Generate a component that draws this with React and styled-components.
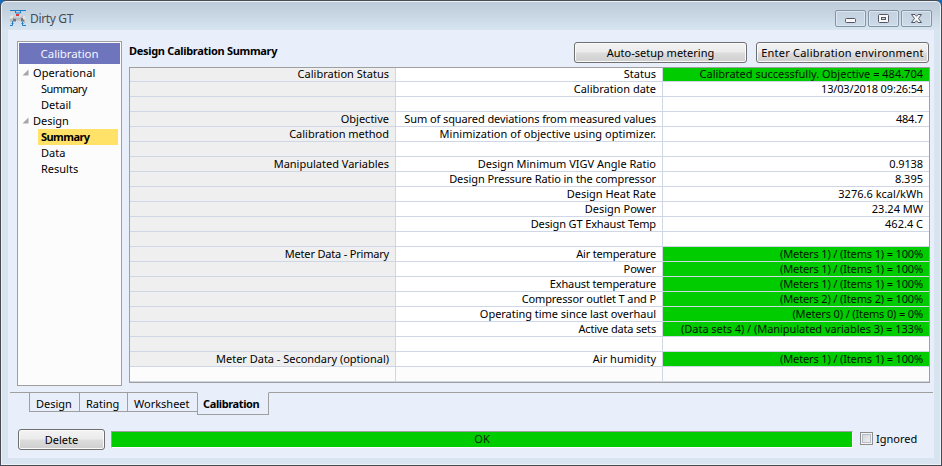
import React from 'react';
import styled, { createGlobalStyle, css } from 'styled-components';

const Global = createGlobalStyle`
  * { box-sizing: border-box; }
  html, body { margin: 0; padding: 0; overflow: hidden; }
  body {
    background: #0a6fc8;
    font-family: "Noto Sans", "Open Sans", sans-serif;
    font-size: 11px;
    color: #000;
  }
`;

const Window = styled.div`
  width: 942px;
  height: 466px;
  display: flex;
  flex-direction: column;
  padding: 0 7px 7px;
  border: 1px solid #4a4b50;
  border-radius: 6px 6px 0 0;
  background: linear-gradient(#bccad9 0, #c6d4e2 12px, #d8e5f1 29px, #d8e5f1 100%);
  box-shadow: inset 0 0 0 1px #eaf2f9;
`;

const TitleBar = styled.header`
  flex: 0 0 29px;
  display: flex;
  align-items: flex-start;
  padding: 9px 2px 0 1px;
`;

const AppIcon = styled.svg`
  width: 18px;
  height: 17px;
  margin-right: 3px;
`;

const WindowTitle = styled.span`
  flex: 1;
  color: #444c55;
  font-size: 12px;
  line-height: 18px;
  letter-spacing: -0.35px;
`;

const CaptionButtons = styled.div`
  display: flex;
  gap: 2px;
`;

const CaptionButton = styled.button`
  width: 31px;
  height: 17px;
  padding: 0;
  display: flex;
  border: 1px solid #8593a6;
  border-radius: 2px;
  background: linear-gradient(#c4d1df, #ccd9e6);
  box-shadow: inset 0 0 0 1px #dbe6f0;
`;

const Client = styled.main`
  flex: 1;
  display: flex;
  flex-direction: column;
  min-height: 0;
  padding: 11px 1px 8px 2px;
  background: #e8effa;
`;

const Page = styled.div`
  flex: 0 0 345px;
  display: flex;
  gap: 7px;
  padding: 0 3px 0 7px;
`;

const Sidebar = styled.nav`
  flex: 0 0 105px;
  border: 1px solid #9f9fa0;
  padding: 1px;
  background: #fcfcfc;
`;

const SidebarHeader = styled.div`
  height: 21px;
  margin-bottom: 1px;
  background: #6f75bd;
  color: #f5f5ff;
  text-align: center;
  font-size: 11.5px;
  line-height: 22px;
  letter-spacing: -0.1px;
`;

const TreeRow = styled.div`
  display: flex;
  align-items: center;
  height: 16px;
  padding-bottom: 2px;
  line-height: 15px;
  margin: 0 2px 0 ${(p) => (p.$child ? 19 : 3)}px;
  padding-left: ${(p) => (p.$child ? 3 : 0)}px;
  letter-spacing: ${(p) => p.$ls || 0}px;
  white-space: nowrap;
  ${(p) =>
    p.$selected &&
    css`
      background: #ffe267;
      font-weight: 700;
    `}
`;

const Expander = styled.svg`
  width: 7px;
  height: 7px;
  margin: 0 4px 0 0;
`;

const Content = styled.section`
  flex: 1;
  display: flex;
  flex-direction: column;
`;

const ContentHeader = styled.div`
  flex: 0 0 26px;
  display: flex;
  align-items: flex-start;
  gap: 9px;
  padding: 1px 1px 0 0;
`;

const Heading = styled.h1`
  flex: 1;
  margin: 0;
  font-size: 11px;
  font-weight: 700;
  line-height: 18px;
  letter-spacing: -0.31px;
`;

const Button = styled.button`
  width: ${(p) => p.$width}px;
  height: 21px;
  padding: 0 0 1px;
  border: 1px solid #707070;
  border-radius: 3px;
  background: linear-gradient(#f3f3f3 0, #ebebeb 48%, #dcdcdc 52%, #cfcfcf 100%);
  box-shadow: inset 0 0 0 1px #fafafa;
  color: #000;
  font: inherit;
  line-height: 20px;
  letter-spacing: ${(p) => p.$ls || 0}px;
  white-space: nowrap;
`;

const Grid = styled.div`
  flex: 0 0 316px;
  display: grid;
  grid-template-columns: 266px 267px 266px;
  grid-template-rows: 14px repeat(20, 15px);
  border: 1px solid #9f9fa0;
  background: #fcfcfc;
`;

const kindStyles = {
  group: css`
    background: #efefef;
    border-right: 1px solid #cfd6e5;
  `,
  label: css`
    background: #fff;
    border-right: 1px solid #cfd6e5;
  `,
  value: css`
    background: #fff;
  `,
};

const Cell = styled.div`
  padding-right: 6px;
  border-bottom: 1px solid #cfd6e5;
  ${(p) => kindStyles[p.$kind]}
  ${(p) => p.$ok && css`background: #00cc00; color: #001400;`}
  ${(p) => p.$last && css`background: #fcfcfc;`}
  text-align: right;
  line-height: ${(p) => (p.$first ? 12 : 14)}px;
  white-space: nowrap;
  letter-spacing: ${(p) => p.$ls || 0}px;
`;

const TabStrip = styled.div`
  flex: 0 0 23px;
  display: flex;
  align-items: flex-start;
  margin-top: 6px;
`;

const TabRule = styled.div`
  width: ${(p) => (p.$width ? `${p.$width}px` : 'auto')};
  flex: ${(p) => (p.$width ? 'none' : 1)};
  height: 1px;
  background: #9f9fa0;
`;

const Tab = styled.div`
  width: ${(p) => p.$width}px;
  height: ${(p) => (p.$active ? 23 : 20)}px;
  padding-left: ${(p) => (p.$active ? 5 : 6)}px;
  border: 1px solid #9f9fa0;
  border-right-width: ${(p) => (p.$active ? 1 : 0)}px;
  border-top-color: ${(p) => (p.$active ? 'transparent' : '#9f9fa0')};
  font-weight: ${(p) => (p.$active ? 700 : 400)};
  line-height: 22px;
  letter-spacing: ${(p) => (p.$active ? -0.38 : 0)}px;
  white-space: nowrap;
`;

const Footer = styled.footer`
  display: flex;
  align-items: flex-start;
  margin-top: 14px;
  padding-left: 8px;
`;

const StatusBar = styled.div`
  width: 742px;
  height: 17px;
  margin: 2px 7px 0 6px;
  border: 1px solid;
  border-color: #9f9fa0 #fff #fff #9f9fa0;
  background: #00cc00;
  color: #002800;
  text-align: center;
  line-height: 14px;
`;

const CheckLabel = styled.div`
  display: flex;
  align-items: center;
  gap: 3px;
  height: 15px;
  margin-top: 2px;
`;

const CheckBox = styled.span`
  width: 13px;
  height: 13px;
  border: 1px solid #8e8f8f;
  background: linear-gradient(135deg, #cbcfd5, #f6f6f6);
  box-shadow: inset 0 0 0 1px #f4f4f4, inset 0 0 0 2px #b8bec8;
`;

const tree = [
  { text: 'Operational', ls: 0.1 },
  { text: 'Summary', child: true, ls: -0.55 },
  { text: 'Detail', child: true },
  { text: 'Design' },
  { text: 'Summary', child: true, selected: true, ls: -0.55 },
  { text: 'Data', child: true },
  { text: 'Results', child: true },
];

/* Each row holds up to three cells, each written as [text, letter spacing]. */
const rows = [
  { group: ['Calibration Status'], label: ['Status'], value: ['Calibrated successfully. Objective = 484.704'], ok: true },
  { label: ['Calibration date'], value: ['13/03/2018 09:26:54', -0.16] },
  {},
  { group: ['Objective'], label: ['Sum of squared deviations from measured values', -0.09], value: ['484.7', -0.2] },
  { group: ['Calibration method'], label: ['Minimization of objective using optimizer.', 0.05] },
  {},
  { group: ['Manipulated Variables'], label: ['Design Minimum VIGV Angle Ratio'], value: ['0.9138', -0.1] },
  { label: ['Design Pressure Ratio in the compressor', -0.07], value: ['8.395'] },
  { label: ['Design Heat Rate'], value: ['3276.6 kcal/kWh', 0.02] },
  { label: ['Design Power'], value: ['23.24 MW'] },
  { label: ['Design GT Exhaust Temp', -0.13], value: ['462.4 C'] },
  {},
  { group: ['Meter Data - Primary', -0.19], label: ['Air temperature', -0.18], value: ['(Meters 1) / (Items 1) = 100%', -0.14], ok: true },
  { label: ['Power'], value: ['(Meters 1) / (Items 1) = 100%', -0.14], ok: true },
  { label: ['Exhaust temperature', -0.15], value: ['(Meters 1) / (Items 1) = 100%', -0.14], ok: true },
  { label: ['Compressor outlet T and P', -0.12], value: ['(Meters 2) / (Items 2) = 100%', -0.14], ok: true },
  { label: ['Operating time since last overhaul', -0.03], value: ['(Meters 0) / (Items 0) = 0%', -0.14], ok: true },
  { label: ['Active data sets', -0.18], value: ['(Data sets 4) / (Manipulated variables 3) = 133%', -0.04], ok: true },
  {},
  { group: ['Meter Data - Secondary (optional)', -0.02], label: ['Air humidity'], value: ['(Meters 1) / (Items 1) = 100%', -0.14], ok: true },
  {},
];

function TurbineIcon() {
  return (
    <AppIcon viewBox="0 0 18 17">
      <path d="M1 5l5 2.500h5L16 4.500v9l-4-3H6L1 12z" fill="#b9bbbd" />
      <path d="M4 8.500l3 .5v2.500H4zM12 8h3v3.500h-3z" fill="#73777b" />
      <path d="M1 5.500h3v3H1zM14 5.500h2v4h-2z" fill="#e6e6e6" />
      <path
        d="M1 .5h16M6.500 .5v2.500h5V.5M3.500 11v4.500H1M13.500 12v3.500H17"
        fill="none"
        stroke="#1f7cc6"
      />
      <path d="M2.500 13.500h2M12.500 13.500h2" stroke="#1f7cc6" />
      <path d="M7 4h3v2H7z" fill="#e23a3a" />
    </AppIcon>
  );
}

function CaptionGlyph({ kind }) {
  const common = { fill: '#f8f8f8', stroke: '#535666' };
  return (
    <svg width="29" height="15" viewBox="0 0 29 15">
      {kind === 'min' && <rect x="9.500" y="7.500" width="10" height="4" rx="1" {...common} />}
      {kind === 'max' && (
        <>
          <rect x="9.500" y="3.500" width="10" height="8" rx="1" {...common} />
          <rect x="12.500" y="6.500" width="4" height="2" fill="#c8d5e3" stroke="#535666" />
        </>
      )}
      {kind === 'close' && (
        <path
          d="M9.500 3.500h3.500l1.500 1.800 1.500-1.800h3.500l-3 4 3 4h-3.500l-1.500-1.800-1.500 1.800H9.500l3-4z"
          strokeLinejoin="round"
          {...common}
        />
      )}
    </svg>
  );
}

const kinds = ['group', 'label', 'value'];

export default function App() {
  return (
    <>
      <Global />
      <Window>
        <TitleBar>
          <TurbineIcon />
          <WindowTitle>Dirty GT</WindowTitle>
          <CaptionButtons>
            {['min', 'max', 'close'].map((kind) => (
              <CaptionButton key={kind} aria-label={kind}>
                <CaptionGlyph kind={kind} />
              </CaptionButton>
            ))}
          </CaptionButtons>
        </TitleBar>
        <Client>
          <Page>
            <Sidebar>
              <SidebarHeader>Calibration</SidebarHeader>
              {tree.map((n, i) => (
                <TreeRow key={i} $child={n.child} $selected={n.selected} $ls={n.ls}>
                  {!n.child && (
                    <Expander viewBox="0 0 7 7">
                      <path d="M6.500 0.500v6h-6z" fill="#a6a6a6" />
                    </Expander>
                  )}
                  {n.text}
                </TreeRow>
              ))}
            </Sidebar>
            <Content>
              <ContentHeader>
                <Heading>Design Calibration Summary</Heading>
                <Button $width={173}>Auto-setup metering</Button>
                <Button $width={173} $ls={0.22}>Enter Calibration environment</Button>
              </ContentHeader>
              <Grid>
                {rows.map((row, i) =>
                  kinds.map((kind) => {
                    const [text, ls] = row[kind] || [];
                    return (
                      <Cell
                        key={`${i}-${kind}`}
                        $kind={kind}
                        $first={i === 0}
                        $last={i === rows.length - 1}
                        $ok={kind === 'value' && row.ok}
                        $ls={ls}
                      >
                        {text}
                      </Cell>
                    );
                  })
                )}
              </Grid>
            </Content>
          </Page>
          <TabStrip>
            <TabRule $width={19} />
            <Tab $width={50}>Design</Tab>
            <Tab $width={48}>Rating</Tab>
            <Tab $width={70}>Worksheet</Tab>
            <Tab $width={72} $active>Calibration</Tab>
            <TabRule />
          </TabStrip>
          <Footer>
            <Button $width={87}>Delete</Button>
            <StatusBar>OK</StatusBar>
            <CheckLabel>
              <CheckBox />
              Ignored
            </CheckLabel>
          </Footer>
        </Client>
      </Window>
    </>
  );
}
